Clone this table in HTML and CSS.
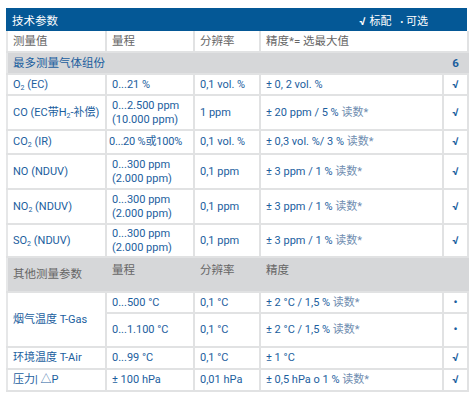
FILE: index.html
```html
<!DOCTYPE html>
<html lang="zh">
<head>
<meta charset="utf-8">
<link rel="stylesheet" href="styles.css">
</head>
<body>
<div class="wrap">
  <div class="title-bar">
    <span class="title">技术参数</span>
    <span class="legend"><b class="ck">√</b> 标配 <span class="dot">•</span> 可选</span>
  </div>
  <table class="spec">
    <colgroup>
      <col class="c1"><col class="c2"><col class="c3"><col class="c4"><col class="c5">
    </colgroup>
    <tr class="head r21">
      <td>测量值</td><td>量程</td><td>分辨率</td><td colspan="2">精度*= 选最大值</td>
    </tr>
    <tr class="section r22">
      <td colspan="4" class="blue">最多测量气体组份</td><td class="mark blue">6</td>
    </tr>
    <tr class="r21">
      <td>O<sub>2</sub> (EC)</td><td>0...21 %</td><td>0,1 vol. %</td><td>± 0, 2 vol. %</td><td class="mark">√</td>
    </tr>
    <tr class="r35">
      <td>CO (EC带H<sub>2</sub>-补偿)</td><td>0...2.500 ppm<br>(10.000 ppm)</td><td>1 ppm</td><td>± 20 ppm / 5 % <span class="rd">读数*</span></td><td class="mark">√</td>
    </tr>
    <tr class="r24">
      <td>CO<sub>2</sub> (IR)</td><td class="tight">0...20 %或100%</td><td>0,1 vol. %</td><td>± 0,3 vol. %/ 3 % <span class="rd">读数*</span></td><td class="mark">√</td>
    </tr>
    <tr class="r35">
      <td>NO (NDUV)</td><td>0...300 ppm<br>(2.000 ppm)</td><td>0,1 ppm</td><td>± 3 ppm / 1 % <span class="rd">读数*</span></td><td class="mark">√</td>
    </tr>
    <tr class="r35">
      <td>NO<sub>2</sub> (NDUV)</td><td>0...300 ppm<br>(2.000 ppm)</td><td>0,1 ppm</td><td>± 3 ppm / 1 % <span class="rd">读数*</span></td><td class="mark">√</td>
    </tr>
    <tr class="r33">
      <td>SO<sub>2</sub> (NDUV)</td><td>0...300 ppm<br>(2.000 ppm)</td><td>0,1 ppm</td><td>± 3 ppm / 1 % <span class="rd">读数*</span></td><td class="mark">√</td>
    </tr>
    <tr class="section2 r35">
      <td>其他测量参数</td><td>量程</td><td>分辨率</td><td colspan="2">精度</td>
    </tr>
    <tr class="r21">
      <td rowspan="2" class="gray">烟气温度 T-Gas</td><td>0...500 °C</td><td>0,1 °C</td><td>± 2 °C / 1,5 % <span class="rd">读数*</span></td><td class="mark">•</td>
    </tr>
    <tr class="r34">
      <td>0...1.100 °C</td><td>0,1 °C</td><td>± 2 °C / 1,5 % <span class="rd">读数*</span></td><td class="mark">•</td>
    </tr>
    <tr class="r22">
      <td class="gray">环境温度 T-Air</td><td>0...99 °C</td><td>0,1 °C</td><td>± 1 °C</td><td class="mark">√</td>
    </tr>
    <tr class="r22 last">
      <td class="gray">压力| △P</td><td>± 100 hPa</td><td>0,01 hPa</td><td>± 0,5 hPa o 1 % <span class="rd">读数*</span></td><td class="mark">√</td>
    </tr>
  </table>
</div>
</body>
</html>
```

FILE: styles.css
```css
html, body {
  margin: 0;
  padding: 0;
  background: #ffffff;
}
body {
  font-family: Roboto, "Noto Sans CJK SC", sans-serif;
  font-size: 11px;
  color: #1b5e9e;
}
.wrap {
  width: 461px;
  margin: 8px 0 0 6px;
}
.title-bar {
  height: 23px;
  background: #045896;
  color: #ffffff;
  display: flex;
  align-items: center;
  justify-content: space-between;
  padding: 0 39px 0 6px;
  font-size: 11.5px;
}
.title {
  color: #ffffff;
}
.legend {
  font-size: 11px;
  color: #ffffff;
}
.legend .ck {
  font-weight: bold;
  margin-right: 1px;
}
.legend .dot {
  margin-left: 6px;
  font-size: 9px;
}
.spec {
  width: 461px;
  border-collapse: collapse;
  table-layout: fixed;
}
.c1 { width: 99px; }
.c2 { width: 88px; }
.c3 { width: 66px; }
.c4 { width: 183px; }
.c5 { width: 25px; }
.spec td {
  border: 2px solid #e1e2e3;
  padding: 0 5px;
  vertical-align: middle;
  line-height: 14px;
  white-space: nowrap;
  overflow: hidden;
}
.spec tr:first-child td {
  border-top: 0;
}
.spec td:first-child {
  border-left: 2px solid #e6e7e8;
}
.spec sub {
  font-size: 7px;
  vertical-align: -2px;
  line-height: 0;
}
.head td {
  color: #666666;
  font-size: 11.5px;
}
.section td,
.section2 td {
  background: #d6d7d9;
  border-left-color: #d6d7d9;
  border-right-color: #d6d7d9;
}
.section td { font-size: 11.5px; }
.section2 td {
  color: #666666;
  font-size: 11.5px;
  vertical-align: top;
  padding-top: 5px;
}
.section2 td:first-child { padding-top: 9px; }
.blue { color: #1b5e9e; }
.gray { color: #1b5e9e; }
.mark {
  text-align: center;
  font-weight: bold;
  padding: 0 !important;
}
.tight { padding: 0 2px !important; letter-spacing: -0.2px; }
.rd { color: #6f8db0; }
.r21 { height: 21px; }
.r22 { height: 22px; }
.r24 { height: 24px; }
.r33 { height: 33px; }
.r34 { height: 34px; }
.r35 { height: 35px; }
```
